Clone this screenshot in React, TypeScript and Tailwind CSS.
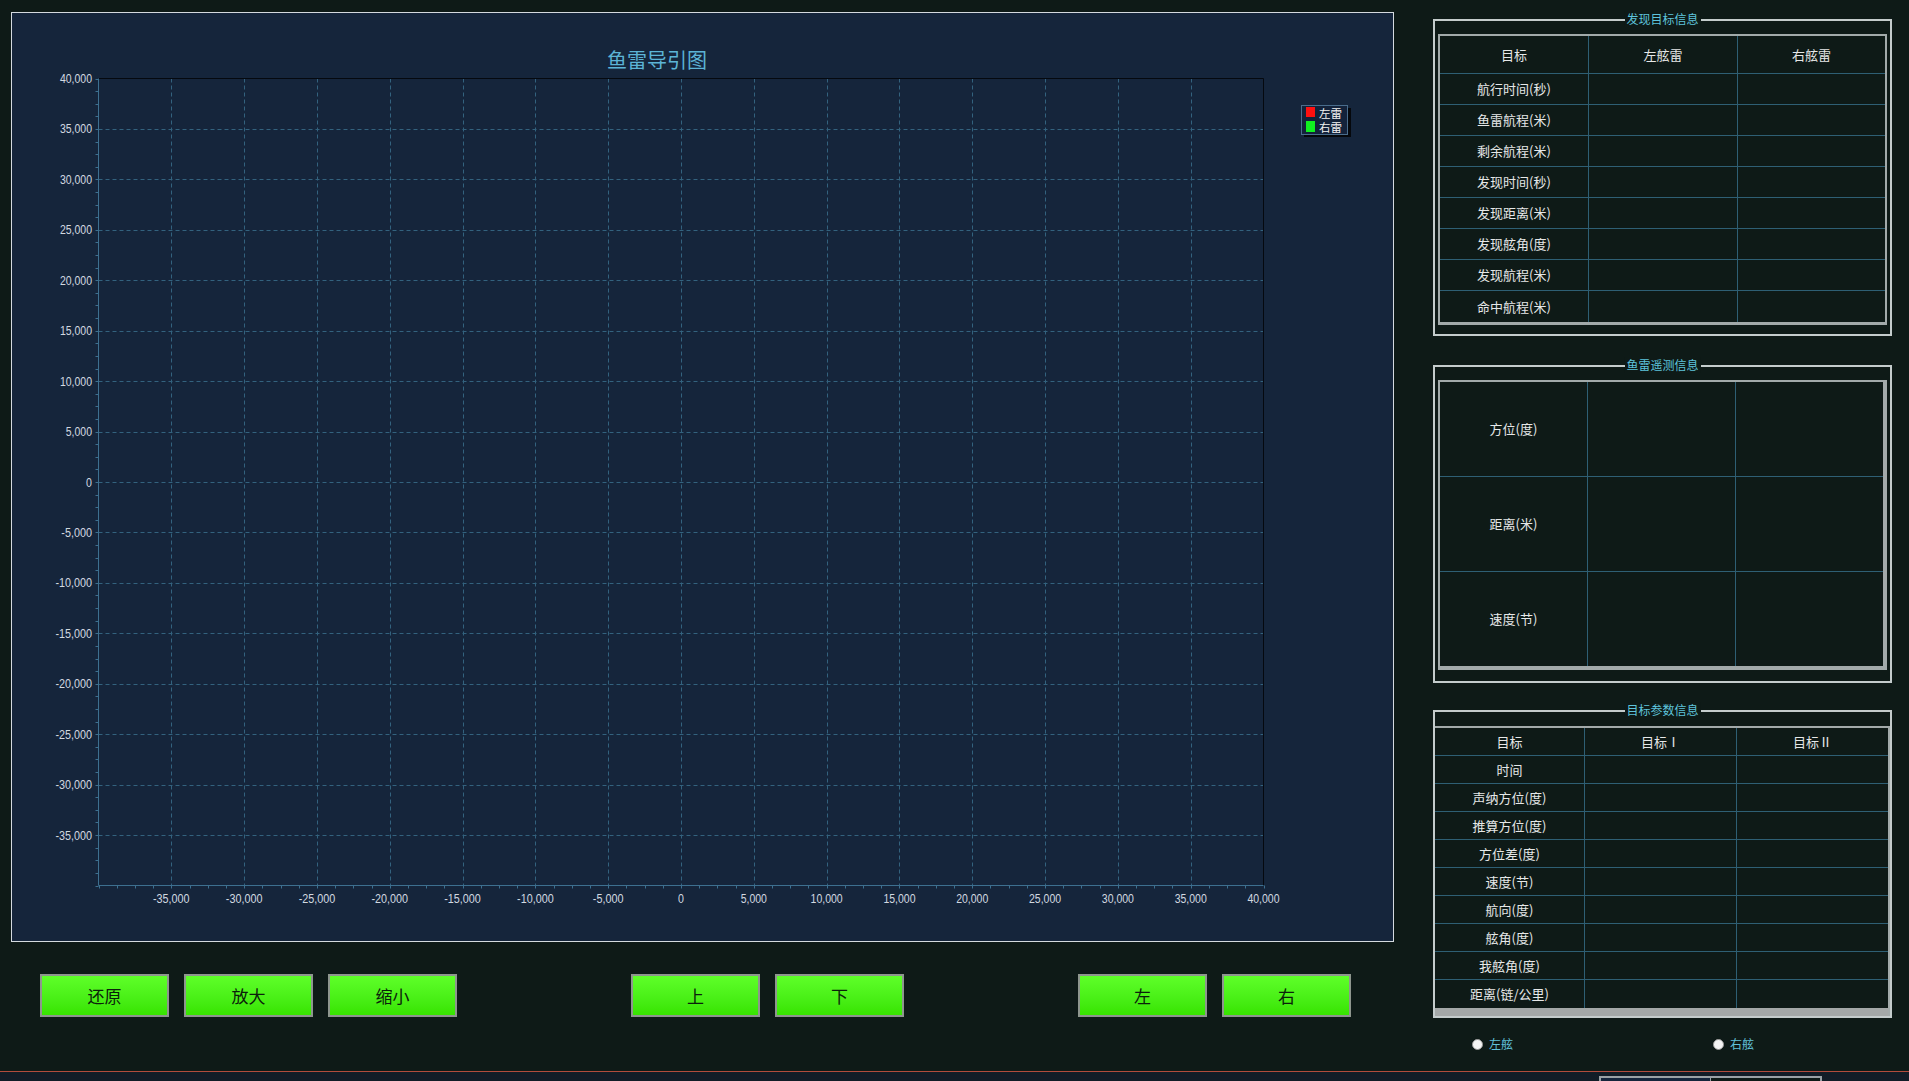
import React from 'react';

const CJK = '"Noto Sans CJK SC", "Noto Sans", sans-serif';
const NUM = '"Liberation Sans", Arial, sans-serif';

// 绘图区参数 (面板内坐标)
const OX = 86.5;
const OY = 65.5;
const PW = 1165;
const PH = 807;
const MAJORS = Array.from({ length: 17 }, (_, i) => -40000 + i * 5000);
const MINORS = Array.from({ length: 65 }, (_, i) => -40000 + i * 1250);

const xAt = (v: number) => OX + ((v + 40000) / 80000) * PW;
const yAt = (v: number) => OY + ((40000 - v) / 80000) * PH;

const fmt = (v: number) => v.toLocaleString('en-US');

// 窄字体宽度估算
const labelLen = (s: string) => {
  let w = 0;
  for (const c of s) {
    if (c === ',') w += 2.6;
    else if (c === '-') w += 4.5;
    else w += 5.9;
  }
  return w;
};

function Chart() {
  return (
    <svg width={1381} height={928} className="block">
      {/* 标题 */}
      <text x={645} y={55} fontSize={20} fill="#5cb4d6" textAnchor="middle" style={{ fontFamily: CJK }}>
        鱼雷导引图
      </text>

      {/* 网格 */}
      {MAJORS.slice(1, -1).map((v) => (
        <line key={'gx' + v} x1={Math.round(xAt(v)) + 0.5} x2={Math.round(xAt(v)) + 0.5} y1={OY} y2={OY + PH} stroke="#33627e" strokeDasharray="4 3" />
      ))}
      {MAJORS.slice(1, -1).map((v) => (
        <line key={'gy' + v} y1={Math.round(yAt(v)) + 0.5} y2={Math.round(yAt(v)) + 0.5} x1={OX} x2={OX + PW} stroke="#33627e" strokeDasharray="4 3" />
      ))}

      {/* 边框 */}
      <line x1={OX} x2={OX + PW} y1={OY} y2={OY} stroke="#05090f" />
      <line x1={OX + PW} x2={OX + PW} y1={OY} y2={OY + PH} stroke="#05090f" />
      <line x1={OX} x2={OX} y1={OY} y2={OY + PH} stroke="#3d7090" />
      <line x1={OX} x2={OX + PW} y1={OY + PH} y2={OY + PH} stroke="#3d7090" />

      {/* 刻度 */}
      {MINORS.map((v) => (
        <line key={'ty' + v} x1={OX - 3} x2={OX} y1={Math.round(yAt(v)) + 0.5} y2={Math.round(yAt(v)) + 0.5} stroke="#3d7090" />
      ))}
      {MINORS.map((v) => (
        <line key={'tx' + v} y1={OY + PH} y2={OY + PH + 3} x1={Math.round(xAt(v)) + 0.5} x2={Math.round(xAt(v)) + 0.5} stroke="#3d7090" />
      ))}

      {/* 标签 */}
      {MAJORS.slice(1).map((v) => {
        const s = fmt(v);
        return (
          <text key={'lx' + v} x={xAt(v)} y={889.5} fontSize={12.5} fill="#d2d9e0" textAnchor="middle" textLength={labelLen(s)} lengthAdjust="spacingAndGlyphs" style={{ fontFamily: NUM }}>
            {s}
          </text>
        );
      })}
      {MAJORS.slice(1).map((v) => {
        const s = fmt(v);
        return (
          <text key={'ly' + v} x={80} y={yAt(v) + 4.5} fontSize={12.5} fill="#d2d9e0" textAnchor="end" textLength={labelLen(s)} lengthAdjust="spacingAndGlyphs" style={{ fontFamily: NUM }}>
            {s}
          </text>
        );
      })}

      {/* 图例 */}
      <rect x={1292} y={95} width={47} height={29} fill="#05080c" />
      <rect x={1289.5} y={92.5} width={46} height={29} fill="#13223a" stroke="#4a6d8c" />
      <rect x={1294} y={94} width={9} height={10} fill="#ff1010" />
      <rect x={1294} y={108} width={9} height={11} fill="#10f020" />
      <text x={1307} y={105} fontSize={11.5} fill="#f2f2f2" style={{ fontFamily: CJK }}>左雷</text>
      <text x={1307} y={118.5} fontSize={11.5} fill="#f2f2f2" style={{ fontFamily: CJK }}>右雷</text>
    </svg>
  );
}

function GreenButton({ label, className = '' }: { label: string; className?: string }) {
  return (
    <button
      className={`w-[129px] h-[43px] border-2 border-[#8e968e] bg-linear-to-b from-[#5eff28] to-[#37e400] text-[17px] text-[#0b200b] ${className}`}
      style={{ fontFamily: CJK }}
    >
      {label}
    </button>
  );
}

function InfoBox({ title, className = '', children }: { title: string; className?: string; children: React.ReactNode }) {
  return (
    <div className={`relative border-2 border-[#c4cccc] ${className}`}>
      <span className="absolute left-1/2 -translate-x-1/2 -top-[10px] bg-[#0e1a17] px-[2px] text-[12px] leading-[16px] text-[#5ec4dc]">
        {title}
      </span>
      {children}
    </div>
  );
}

const FOUND_ROWS = ['航行时间(秒)', '鱼雷航程(米)', '剩余航程(米)', '发现时间(秒)', '发现距离(米)', '发现舷角(度)', '发现航程(米)', '命中航程(米)'];
const TELE_ROWS = ['方位(度)', '距离(米)', '速度(节)'];
const PARAM_ROWS = ['时间', '声纳方位(度)', '推算方位(度)', '方位差(度)', '速度(节)', '航向(度)', '舷角(度)', '我舷角(度)', '距离(链/公里)'];

export default function App() {
  return (
    <div className="w-[1909px] h-[1081px] overflow-hidden bg-[#0e1a17] text-[#e6e8e8]" style={{ fontFamily: CJK }}>
      <div className="flex h-[1071px]">
        {/* 左侧 */}
        <div className="w-[1394px] pl-[11px] pt-[12px] flex flex-col">
          <div className="w-[1383px] h-[930px] border border-[#d4dadf] bg-[#15253b]">
            <Chart />
          </div>
          <div className="flex mt-[32px] pl-[29px]">
            <div className="flex gap-[15px]">
              <GreenButton label="还原" />
              <GreenButton label="放大" />
              <GreenButton label="缩小" />
            </div>
            <div className="flex gap-[15px] ml-[174px]">
              <GreenButton label="上" />
              <GreenButton label="下" />
            </div>
            <div className="flex gap-[15px] ml-[174px]">
              <GreenButton label="左" />
              <GreenButton label="右" />
            </div>
          </div>
        </div>

        {/* 右侧 */}
        <div className="ml-[39px] w-[459px] pt-[19px] flex flex-col">
          <InfoBox title="发现目标信息" className="h-[317px]">
            <div className="mx-[3px] mt-[13px] border-2 border-b-[3px] border-[#a2aaaa] text-[13px]">
              <div className="grid grid-cols-[149px_149px_1fr]">
                {['目标', '左舷雷', '右舷雷'].map((h, i) => (
                  <div key={h} className={`h-[38px] flex items-center justify-center border-b border-[#2e5f74] ${i < 2 ? 'border-r' : ''}`}>
                    {h}
                  </div>
                ))}
                {FOUND_ROWS.map((r, ri) =>
                  [r, '', ''].map((c, i) => (
                    <div
                      key={r + i}
                      className={`h-[31px] flex items-center justify-center border-[#2e5f74] ${i < 2 ? 'border-r' : ''} ${ri < FOUND_ROWS.length - 1 ? 'border-b' : ''}`}
                    >
                      {c}
                    </div>
                  ))
                )}
              </div>
            </div>
          </InfoBox>

          <InfoBox title="鱼雷遥测信息" className="h-[318px] mt-[29px]">
            <div className="mx-[3px] mt-[13px] border-2 border-r-4 border-b-4 border-[#a2aaaa] text-[13px]">
              <div className="grid grid-cols-[148px_148px_1fr]">
                {TELE_ROWS.map((r, ri) =>
                  [r, '', ''].map((c, i) => (
                    <div
                      key={r + i}
                      className={`${ri < 2 ? 'h-[95px] border-b' : 'h-[94px]'} flex items-center justify-center border-[#2e5f74] ${i < 2 ? 'border-r' : ''}`}
                    >
                      {c}
                    </div>
                  ))
                )}
              </div>
            </div>
          </InfoBox>

          <InfoBox title="目标参数信息" className="h-[308px] mt-[27px]">
            <div className="mt-[14px] border-t-2 border-r-2 border-[#a2aaaa] text-[13px]">
              <div className="grid grid-cols-[150px_152px_1fr]">
                {['目标', '目标Ⅰ', '目标Ⅱ'].map((h, i) => (
                  <div key={h} className={`h-[28px] flex items-center justify-center border-b border-[#2e5f74] ${i < 2 ? 'border-r' : ''}`}>
                    {h}
                  </div>
                ))}
                {PARAM_ROWS.map((r, ri) =>
                  [r, '', ''].map((c, i) => (
                    <div
                      key={r + i}
                      className={`h-[28px] flex items-center justify-center border-[#2e5f74] ${i < 2 ? 'border-r' : ''} ${ri < PARAM_ROWS.length - 1 ? 'border-b' : ''}`}
                    >
                      {c}
                    </div>
                  ))
                )}
              </div>
              <div className="h-[8px] bg-[#a4a8a8]" />
            </div>
          </InfoBox>

          <div className="flex items-center mt-[17px] pl-[39px] text-[12px] text-[#62c2da]">
            <div className="flex items-center gap-[6px]">
              <span className="w-[11px] h-[11px] rounded-full bg-[#f4f4f4] border border-[#9a9a9a]" />
              <span>左舷</span>
            </div>
            <div className="flex items-center gap-[6px] ml-[200px]">
              <span className="w-[11px] h-[11px] rounded-full bg-[#f4f4f4] border border-[#9a9a9a]" />
              <span>右舷</span>
            </div>
          </div>
        </div>
      </div>

      {/* 底部状态栏 */}
      <div className="h-[1px] bg-[#b24c3c]" />
      <div className="h-[9px] bg-[#121d27] flex pl-[1599px] pt-[4px]">
        <div className="flex w-[223px] h-[5px] border-t-2 border-x-2 border-[#9aa2a6]">
          <div className="w-[110px] bg-[#15253b] border-r border-[#9aa2a6]" />
          <div className="flex-1 bg-[#0e1a17]" />
        </div>
      </div>
    </div>
  );
}
